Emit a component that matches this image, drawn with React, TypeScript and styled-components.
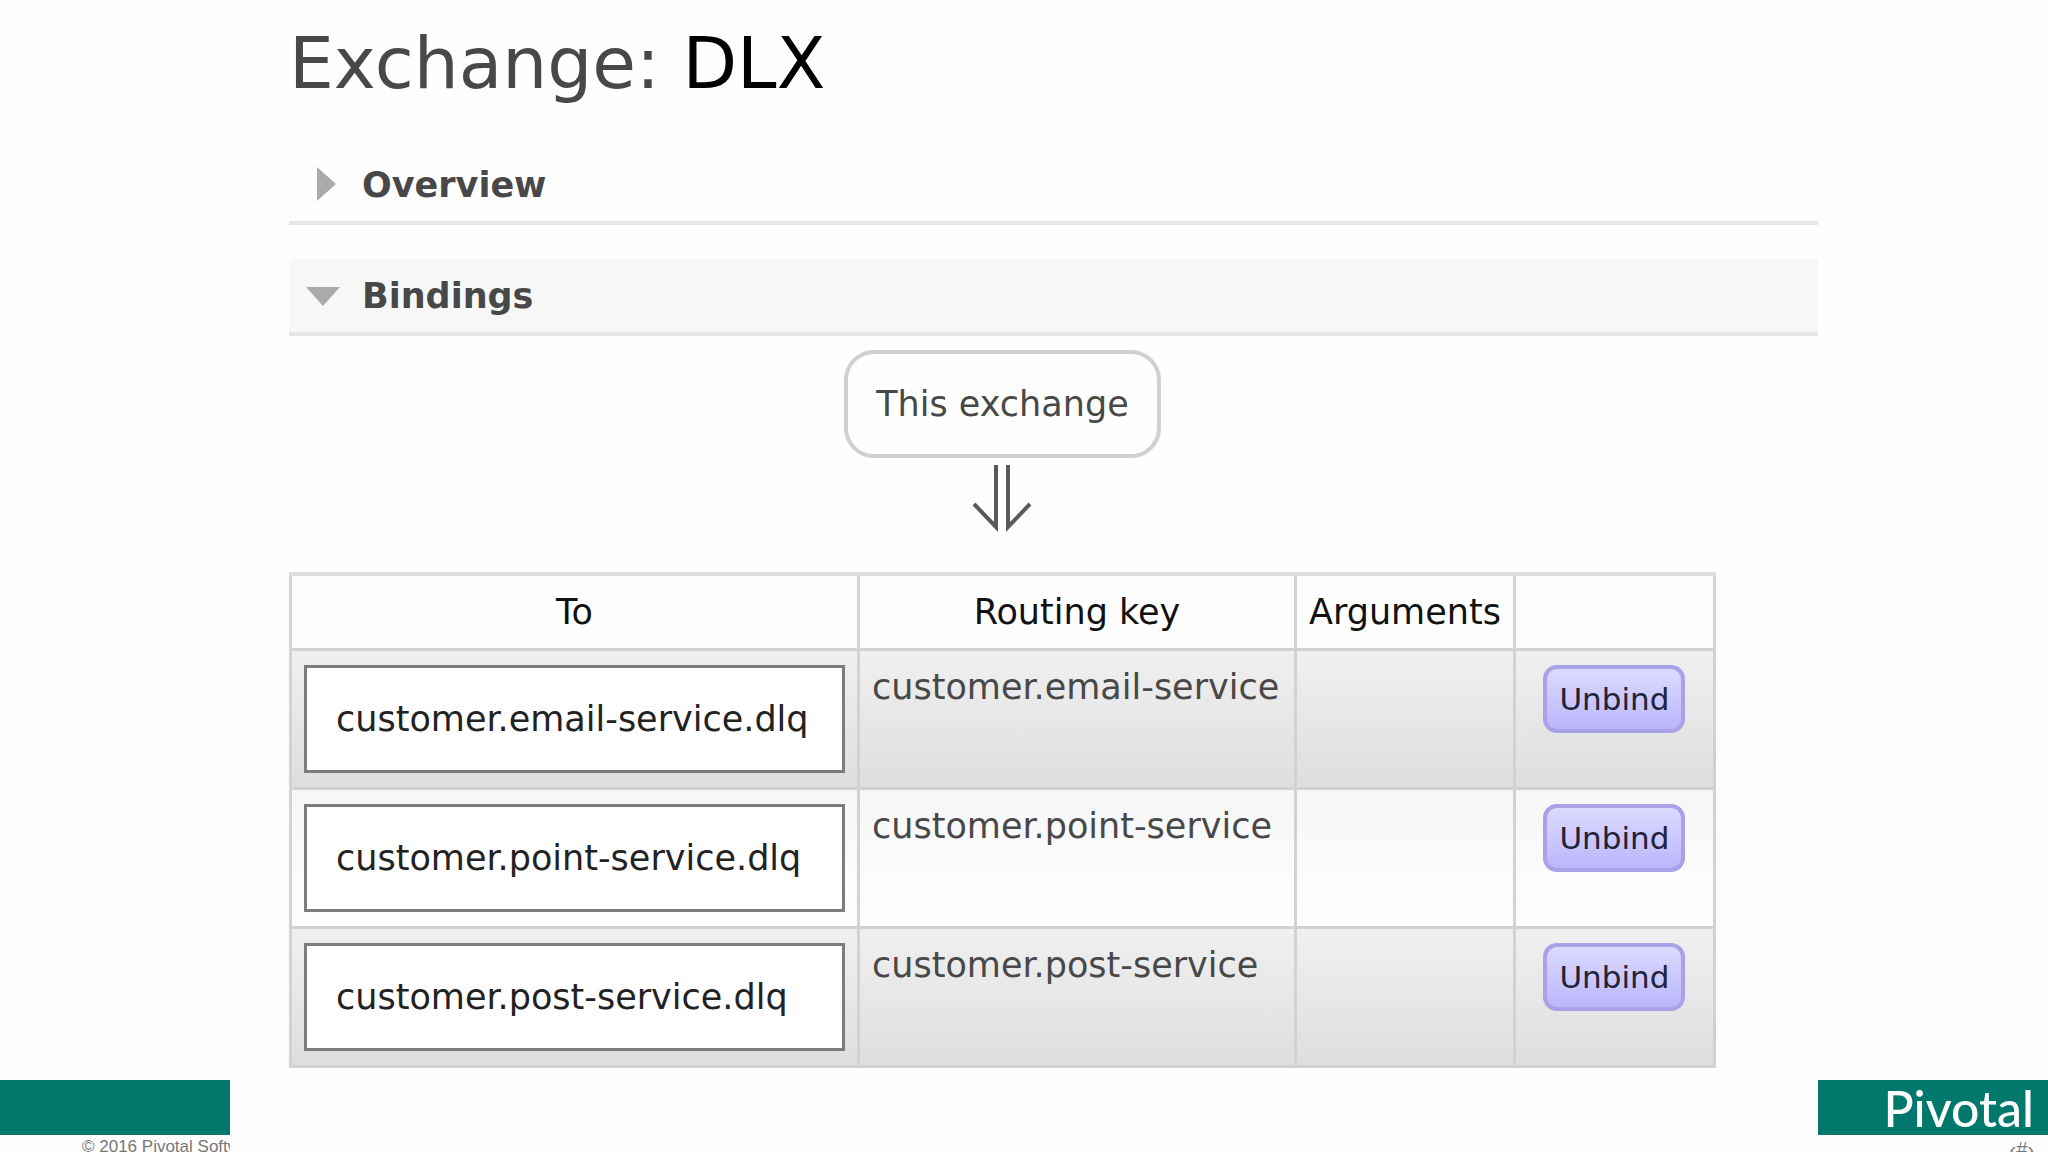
import React from "react";
import styled, { createGlobalStyle } from "styled-components";

const GlobalStyle = createGlobalStyle`
  *, *::before, *::after { box-sizing: border-box; }
  body { margin: 0; background: #fefefe; }
`;

const Slide = styled.div`
  display: flex;
  flex-direction: column;
  height: 100vh;
  overflow: hidden;
  color: #484848;
  font-family: "DejaVu Sans", Verdana, sans-serif;
  font-size: 35px;
  line-height: 44px;
`;

const Content = styled.main`
  flex: 1 0 auto;
  padding: 22px 230px 0 289px;
`;

const Title = styled.h1`
  margin: 0 0 42px;
  font-size: 71px;
  font-weight: 400;
  line-height: 84px;

  b {
    color: #000;
    font-weight: 400;
  }
`;

const SectionHeading = styled.h2<{ $open?: boolean }>`
  margin: 0 0 ${(p) => (p.$open ? 14 : 34)}px;
  border-bottom: 4px solid #e6e6e6;
  background: ${(p) => (p.$open ? "#f7f7f7" : "transparent")};
  font-size: 35px;
  line-height: 44px;
`;

const SectionToggle = styled.button`
  display: flex;
  align-items: center;
  width: 100%;
  padding: 15px 0 14px 12px;
  border: 0;
  background: none;
  color: inherit;
  font: inherit;
  text-align: left;
  cursor: pointer;
`;

const Marker = styled.svg`
  flex: none;
  width: 44px;
  height: 36px;
  margin-right: 17px;
  fill: #aaa;
`;

const Diagram = styled.div`
  display: inline-flex;
  flex-direction: column;
`;

const Source = styled.div`
  display: flex;
  flex-direction: column;
  align-items: center;
`;

const ExchangeBox = styled.div`
  padding: 28px;
  border: 4px solid #d0d0d0;
  border-radius: 30px;
`;

const Arrow = styled.svg`
  width: 60px;
  height: 70px;
  margin: 7px 0 37px;
  fill: none;
  stroke: #5a5a5a;
  stroke-width: 4;
`;

const BindingTable = styled.table`
  border-collapse: collapse;
`;

const Column = styled.col<{ $width: number }>`
  width: ${(p) => p.$width}px;
`;

const HeadCell = styled.th`
  padding: 14px 12px;
  border: 3px solid #d2d2d2;
  border-top: 4px solid #ddd;
  color: #111;
  font-weight: 400;
  text-align: center;
`;

const BindingRow = styled.tr`
  &:nth-child(odd) {
    background: linear-gradient(#f0f0f0, #dedede);
  }

  &:nth-child(even) {
    background: linear-gradient(#f6f6f6, #fff);
  }
`;

const Cell = styled.td`
  padding: 14px 12px;
  border: 3px solid #d2d2d2;
  vertical-align: top;
`;

const QueueLink = styled.a`
  display: block;
  padding: 29px;
  border: 3px solid #7c7c7c;
  background: #fff;
  color: #222;
  text-decoration: none;
`;

const UnbindButton = styled.button`
  display: block;
  margin: 0 auto;
  padding: 8px 12px;
  border: 4px solid #a9a2e6;
  border-radius: 14px;
  background: linear-gradient(#dcdaff, #bab6fb);
  color: #222238;
  font: inherit;
  font-size: 31px;
  cursor: pointer;
`;

const Footer = styled.footer`
  display: flex;
  flex: none;
  justify-content: space-between;
  height: 72px;
  overflow: hidden;
  color: #777;
  font: 17px/24px "Liberation Sans", Arial, sans-serif;
`;

const FooterSide = styled.div`
  width: 230px;
  overflow: hidden;
  white-space: nowrap;
`;

const Band = styled.div`
  display: flex;
  align-items: center;
  justify-content: flex-end;
  height: 55px;
  padding-right: 14px;
  background: #00786b;
`;

const Wordmark = styled.span`
  color: #fff;
  font: 500 50px/52px Lato, sans-serif;
`;

const Copyright = styled.small`
  display: block;
  padding-left: 82px;
  font-size: 17px;
`;

const SlideNumber = styled.div`
  padding-right: 14px;
  font-size: 20px;
  line-height: 28px;
  text-align: right;
`;

const columnWidths = [568, 437, 218, 200];

const bindings = [
  "customer.email-service",
  "customer.point-service",
  "customer.post-service",
];

export default function App() {
  return (
    <Slide>
      <GlobalStyle />
      <Content>
        <Title>
          Exchange: <b>DLX</b>
        </Title>
        <SectionHeading>
          <SectionToggle type="button" aria-expanded="false">
            <Marker viewBox="0 0 44 36" aria-hidden="true">
              <path d="M16 0v34l19-17z" />
            </Marker>
            Overview
          </SectionToggle>
        </SectionHeading>
        <SectionHeading $open>
          <SectionToggle type="button" aria-expanded="true">
            <Marker viewBox="0 0 44 36" aria-hidden="true">
              <path d="M5 9h34l-17 19z" />
            </Marker>
            Bindings
          </SectionToggle>
        </SectionHeading>
        <Diagram>
          <Source>
            <ExchangeBox>This exchange</ExchangeBox>
            <Arrow viewBox="0 0 60 70" aria-hidden="true">
              <path d="M2 39L24 62V0M58 39L36 62V0" />
            </Arrow>
          </Source>
          <BindingTable>
            <colgroup>
              {columnWidths.map((width) => (
                <Column key={width} $width={width} />
              ))}
            </colgroup>
            <thead>
              <tr>
                <HeadCell scope="col">To</HeadCell>
                <HeadCell scope="col">Routing key</HeadCell>
                <HeadCell scope="col">Arguments</HeadCell>
                <HeadCell />
              </tr>
            </thead>
            <tbody>
              {bindings.map((key) => (
                <BindingRow key={key}>
                  <Cell>
                    <QueueLink href="#">{key}.dlq</QueueLink>
                  </Cell>
                  <Cell>{key}</Cell>
                  <Cell />
                  <Cell>
                    <UnbindButton type="button">Unbind</UnbindButton>
                  </Cell>
                </BindingRow>
              ))}
            </tbody>
          </BindingTable>
        </Diagram>
      </Content>
      <Footer>
        <FooterSide>
          <Band />
          <Copyright>© 2016 Pivotal Software, Inc.</Copyright>
        </FooterSide>
        <FooterSide>
          <Band>
            <Wordmark>Pivotal</Wordmark>
          </Band>
          <SlideNumber>‹#›</SlideNumber>
        </FooterSide>
      </Footer>
    </Slide>
  );
}
